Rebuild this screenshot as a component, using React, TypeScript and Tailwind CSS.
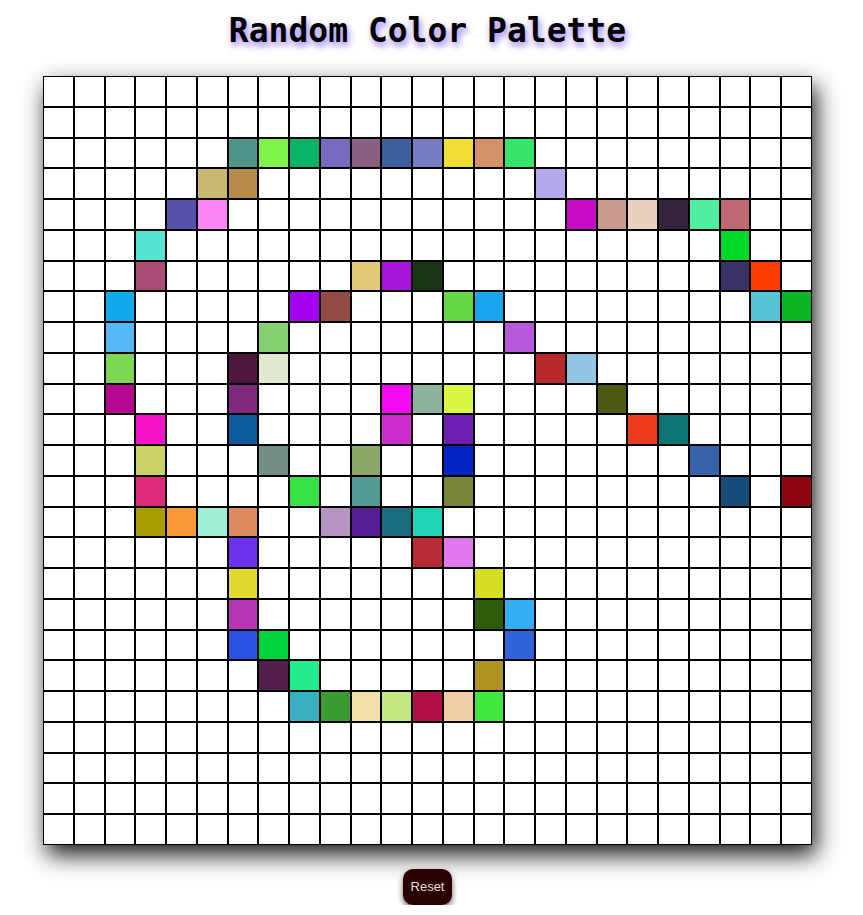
const SIZE = 25;

// painted cells, keyed "row-col"
const painted: Record<string, string> = {
  "2-6": "#4e9488", "2-7": "#7ff24b", "2-8": "#08b266", "2-9": "#7a6abf", "2-10": "#8a5f80",
  "2-11": "#3d5f9c", "2-12": "#787cc3", "2-13": "#f0dd36", "2-14": "#d5916a", "2-15": "#38e56c",
  "3-5": "#c8b870", "3-6": "#b58d48", "3-16": "#b3a9ec",
  "4-4": "#5550a8", "4-5": "#fb86f8", "4-17": "#c70ac3", "4-18": "#c99c8f", "4-19": "#e9d0bf",
  "4-20": "#32223a", "4-21": "#52eea0", "4-22": "#c06874",
  "5-3": "#58e4d4", "5-22": "#00d92a",
  "6-3": "#a84c74", "6-10": "#e2ca76", "6-11": "#a413d6", "6-12": "#173512", "6-22": "#3c3166",
  "6-23": "#ff3d00",
  "7-2": "#12a8ec", "7-8": "#a402f0", "7-9": "#924c44", "7-13": "#66d846", "7-14": "#1aa6ee",
  "7-23": "#56c4d4", "7-24": "#0eb424",
  "8-2": "#55b8f6", "8-7": "#86cf70", "8-15": "#b659dc",
  "9-2": "#7ed754", "9-6": "#4f173e", "9-7": "#dfeacf", "9-16": "#b8292c", "9-17": "#93c6e4",
  "10-2": "#b40690", "10-6": "#80297e", "10-11": "#f30af1", "10-12": "#8bb39d", "10-13": "#d8f843",
  "10-18": "#4e5a12",
  "11-3": "#f412c6", "11-6": "#0c5a9c", "11-11": "#cd2ccc", "11-13": "#6a1fb0", "11-19": "#ec3c1c",
  "11-20": "#0c7474",
  "12-3": "#c9d266", "12-7": "#718f86", "12-10": "#8ca866", "12-13": "#0222c2", "12-21": "#3862aa",
  "13-3": "#dc2a78", "13-8": "#36e244", "13-10": "#549b98", "13-13": "#778538", "13-22": "#164c7a",
  "13-24": "#8e0610",
  "14-3": "#a89c02", "14-4": "#f89837", "14-5": "#a0f0d8", "14-6": "#de8a60", "14-9": "#b894c4",
  "14-10": "#531e94", "14-11": "#186c7c", "14-12": "#20d4b6",
  "15-6": "#6a32ec", "15-12": "#b82a34", "15-13": "#e278ee",
  "16-6": "#e2d830", "16-14": "#d5de20",
  "17-6": "#b436b2", "17-14": "#2e5a0a", "17-15": "#34aef4",
  "18-6": "#2a50e2", "18-7": "#00d43c", "18-15": "#3062d8",
  "19-7": "#531f4b", "19-8": "#22ec8e", "19-14": "#ad9224",
  "20-8": "#3aafc2", "20-9": "#3a9c30", "20-10": "#f2e0a8", "20-11": "#c4e880", "20-12": "#ae0e42",
  "20-13": "#f2cea8", "20-14": "#40e840",
};

const cells = Array.from({ length: SIZE * SIZE }, (_, i) => {
  const row = Math.floor(i / SIZE);
  const col = i % SIZE;
  return painted[`${row}-${col}`] || "#ffffff";
});

export default function App() {
  return (
    <div className="flex w-full flex-col items-center bg-white pr-2">
      <h1 className="pt-[8px] text-[33px] font-bold leading-[45px] text-black [font-family:'DejaVu_Sans_Mono',monospace] [text-shadow:2px_4px_7px_#9478f0]">
        Random Color Palette
      </h1>

      <div className="mt-[23px] grid w-[769px] grid-cols-[repeat(25,30.76px)] shadow-[4px_10px_22px_rgba(0,0,0,0.9)]">
        {cells.map((color, i) => (
          <div
            key={i}
            className="h-[30.76px] border border-black"
            style={{ backgroundColor: color }}
          />
        ))}
      </div>

      <button className="mt-[24px] h-9 rounded-[10px] bg-[#2b0000] px-2 text-[13px] text-[#e6dede] shadow-[0_3px_6px_rgba(0,0,0,0.6)] [font-family:'Liberation_Sans',Arial,sans-serif]">
        Reset
      </button>
    </div>
  );
}
